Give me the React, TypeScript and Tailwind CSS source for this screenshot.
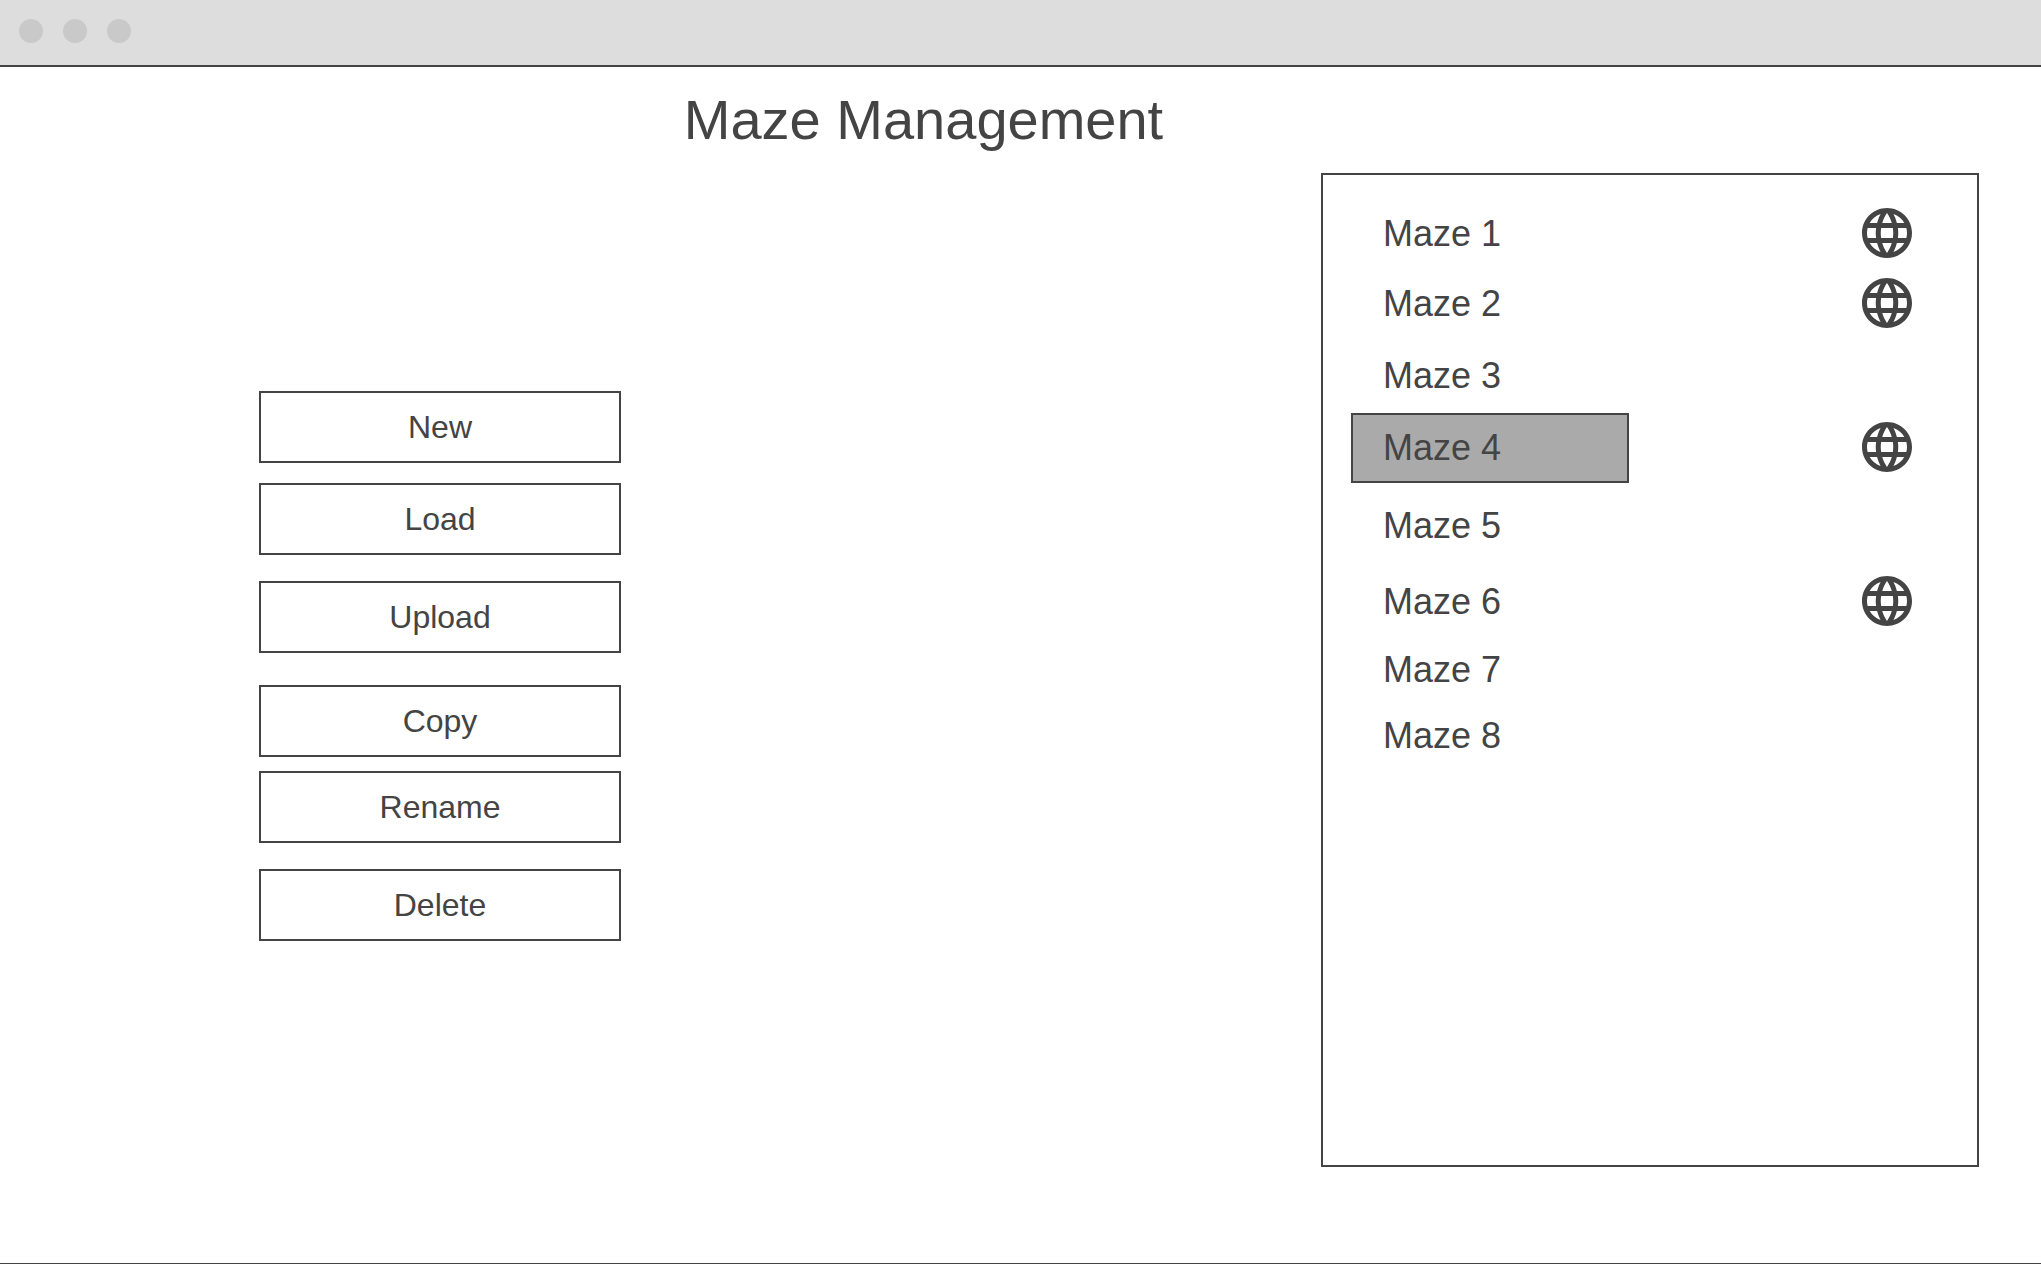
import { useState } from "react";
import { MdLanguage } from "react-icons/md";

const actions = [
  { label: "New", gap: "" },
  { label: "Load", gap: "mt-5" },
  { label: "Upload", gap: "mt-[26px]" },
  { label: "Copy", gap: "mt-8" },
  { label: "Rename", gap: "mt-3.5" },
  { label: "Delete", gap: "mt-[26px]" },
];

const mazes = [
  { name: "Maze 1", online: true, gap: "" },
  { name: "Maze 2", online: true, gap: "mt-1" },
  { name: "Maze 3", online: false, gap: "mt-1.5" },
  { name: "Maze 4", online: true, gap: "mt-1.5" },
  { name: "Maze 5", online: false, gap: "mt-3" },
  { name: "Maze 6", online: true, gap: "mt-2.5" },
  { name: "Maze 7", online: false, gap: "mt-0.5" },
  { name: "Maze 8", online: false, gap: "" },
];

function TitleBar() {
  return (
    <header className="flex items-start gap-5 border-b-2 border-[#444] bg-[#ddd] px-[19px] pt-[19px] pb-[22px]">
      <span className="size-6 rounded-full bg-[#c9c9c9]" />
      <span className="size-6 rounded-full bg-[#c9c9c9]" />
      <span className="size-6 rounded-full bg-[#c9c9c9]" />
    </header>
  );
}

function ActionList() {
  return (
    <nav aria-label="Maze actions" className="col-start-2 flex flex-col pt-[218px]">
      {actions.map((a) => (
        <button
          key={a.label}
          type="button"
          className={`h-[72px] w-full border-2 border-[#444] text-center text-[32px] leading-10 ${a.gap}`}
        >
          {a.label}
        </button>
      ))}
    </nav>
  );
}

function MazeList() {
  const [selected, setSelected] = useState("Maze 4");
  return (
    <ul className="col-start-4 border-2 border-[#444] pt-[26px] pr-[60px] pl-7">
      {mazes.map((m) => (
        <li key={m.name} className={`flex h-[66px] items-center justify-between ${m.gap}`}>
          <button
            type="button"
            aria-pressed={selected === m.name}
            onClick={() => setSelected(m.name)}
            className={`h-[70px] w-[278px] border-2 px-[30px] text-left text-[36px] leading-10 ${
              selected === m.name ? "border-[#444] bg-[#aaa]" : "border-transparent"
            }`}
          >
            {m.name}
          </button>
          {m.online && <MdLanguage className="mb-0.5 size-[60px] shrink-0" aria-label="Online" />}
        </li>
      ))}
    </ul>
  );
}

export default function App() {
  return (
    <div className="flex min-h-screen flex-col border-b border-[#444] bg-white font-['Liberation_Sans',Arial,sans-serif] text-[#444]">
      <TitleBar />
      <h1 className="py-[21px] pr-[194px] text-center text-[56px] leading-[64px]">Maze Management</h1>
      <main className="grid flex-1 grid-cols-[259fr_362fr_700fr_658fr_62fr] pb-24">
        <ActionList />
        <MazeList />
      </main>
    </div>
  );
}
